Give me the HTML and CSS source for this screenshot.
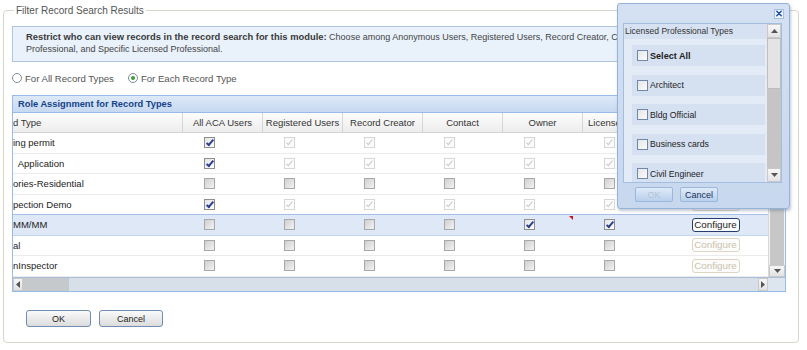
FILE: index.html
```html
<!DOCTYPE html>

<html>

<head>
  <meta charset="UTF-8" />
  <meta name="viewport" content="width=device-width, initial-scale=1.0" />
  <title>filter record search results</title>
  <link rel="stylesheet" href="styles.css">
</head>

<body>
  <fieldset class='filterBox'>
    <legend>Filter Record Search Results</legend>

    <div class='infoBox'>
      <p><b>Restrict who can view records in the record search for this module:</b> Choose among Anonymous Users, Registered Users, Record Creator, Contact, Owner, Licensed<br>Professional, and Specific Licensed Professional.</p>
    </div>

    <div class='scopeChoice'>
      <label><span class='radio'></span>For All Record Types</label>
      <label><span class='radio checked'></span>For Each Record Type</label>
    </div>

    <!-- role grid, scrolled to the right -->
    <div class='rolePanel'>
      <div class='panelTitle'>Role Assignment for Record Types</div>

      <div class='gridBody'>
        <div class='gridView'>
          <div class='gridRow gridHead'>
            <div class='nameCell'>d Type</div>
            <div>All ACA Users</div>
            <div>Registered Users</div>
            <div>Record Creator</div>
            <div>Contact</div>
            <div>Owner</div>
            <div class='clipped'>Licensed Professional</div>
            <div></div>
          </div>

          <div class='gridRow'>
            <div class='nameCell'>ing permit</div>
            <div class='cbCell'><span class='cb checked'></span></div>
            <div class='cbCell'><span class='cb locked'></span></div>
            <div class='cbCell'><span class='cb locked'></span></div>
            <div class='cbCell'><span class='cb locked'></span></div>
            <div class='cbCell'><span class='cb locked'></span></div>
            <div class='cbCell'><span class='cb locked'></span></div>
            <div class='btnCell'><button class='configBtn' disabled>Configure</button></div>
          </div>

          <div class='gridRow'>
            <div class='nameCell'>&nbsp; Application</div>
            <div class='cbCell'><span class='cb checked'></span></div>
            <div class='cbCell'><span class='cb locked'></span></div>
            <div class='cbCell'><span class='cb locked'></span></div>
            <div class='cbCell'><span class='cb locked'></span></div>
            <div class='cbCell'><span class='cb locked'></span></div>
            <div class='cbCell'><span class='cb locked'></span></div>
            <div class='btnCell'><button class='configBtn' disabled>Configure</button></div>
          </div>

          <div class='gridRow'>
            <div class='nameCell'>ories-Residential</div>
            <div class='cbCell'><span class='cb'></span></div>
            <div class='cbCell'><span class='cb'></span></div>
            <div class='cbCell'><span class='cb'></span></div>
            <div class='cbCell'><span class='cb'></span></div>
            <div class='cbCell'><span class='cb'></span></div>
            <div class='cbCell'><span class='cb'></span></div>
            <div class='btnCell'><button class='configBtn' disabled>Configure</button></div>
          </div>

          <div class='gridRow'>
            <div class='nameCell'>pection Demo</div>
            <div class='cbCell'><span class='cb checked'></span></div>
            <div class='cbCell'><span class='cb locked'></span></div>
            <div class='cbCell'><span class='cb locked'></span></div>
            <div class='cbCell'><span class='cb locked'></span></div>
            <div class='cbCell'><span class='cb locked'></span></div>
            <div class='cbCell'><span class='cb locked'></span></div>
            <div class='btnCell'><button class='configBtn' disabled>Configure</button></div>
          </div>

          <div class='gridRow selected'>
            <div class='nameCell'>MM/MM</div>
            <div class='cbCell'><span class='cb'></span></div>
            <div class='cbCell'><span class='cb'></span></div>
            <div class='cbCell'><span class='cb'></span></div>
            <div class='cbCell'><span class='cb'></span></div>
            <div class='cbCell dirty'><span class='cb checked'></span></div>
            <div class='cbCell'><span class='cb checked'></span></div>
            <div class='btnCell'><button class='configBtn'>Configure</button></div>
          </div>

          <div class='gridRow'>
            <div class='nameCell'>al</div>
            <div class='cbCell'><span class='cb'></span></div>
            <div class='cbCell'><span class='cb'></span></div>
            <div class='cbCell'><span class='cb'></span></div>
            <div class='cbCell'><span class='cb'></span></div>
            <div class='cbCell'><span class='cb'></span></div>
            <div class='cbCell'><span class='cb'></span></div>
            <div class='btnCell'><button class='configBtn' disabled>Configure</button></div>
          </div>

          <div class='gridRow'>
            <div class='nameCell'>nInspector</div>
            <div class='cbCell'><span class='cb'></span></div>
            <div class='cbCell'><span class='cb'></span></div>
            <div class='cbCell'><span class='cb'></span></div>
            <div class='cbCell'><span class='cb'></span></div>
            <div class='cbCell'><span class='cb'></span></div>
            <div class='cbCell'><span class='cb'></span></div>
            <div class='btnCell'><button class='configBtn' disabled>Configure</button></div>
          </div>
        </div>

        <div class='vScroll'>
          <div class='vThumb'></div>
          <div class='arrowBox'>
            <svg width="7" height="4" viewBox="0 0 7 4"><path d="M0 0H7L3.5 4Z" fill="#555"></path></svg>
          </div>
        </div>
      </div>

      <div class='hScrollRow'>
        <div class='hScroll'>
          <div class='arrowBox'>
            <svg width="4" height="7" viewBox="0 0 4 7"><path d="M4 0V7L0 3.5Z" fill="#555"></path></svg>
          </div>
          <div class='hThumb'></div>
          <div class='hTrack'></div>
          <div class='arrowBox'>
            <svg width="4" height="7" viewBox="0 0 4 7"><path d="M0 0V7L4 3.5Z" fill="#555"></path></svg>
          </div>
        </div>
        <div class='scrollCorner'></div>
      </div>
    </div>

    <div class='actions'>
      <button class='okBtn'>OK</button>
      <button class='cancelBtn'>Cancel</button>
    </div>
  </fieldset>

  <!-- licensed professional picker, opened over the grid -->
  <div class='lpPopup'>
    <div class='lpBar'>
      <button class='lpClose'>
        <svg width="9" height="9" viewBox="0 0 9 9">
          <path d="M2 2L7 7M7 2L2 7" stroke="#1d4e9e" stroke-width="1.6" stroke-linecap="round"></path>
        </svg>
      </button>
    </div>

    <div class='lpList'>
      <div class='lpContent'>
        <p class='lpTitle'>Licensed Professional Types</p>
        <div class='lpItems'>
          <label class='lpItem selectAll'><span class='lpCb'></span>Select All</label>
          <label class='lpItem'><span class='lpCb'></span>Architect</label>
          <label class='lpItem'><span class='lpCb'></span>Bldg Official</label>
          <label class='lpItem'><span class='lpCb'></span>Business cards</label>
          <label class='lpItem'><span class='lpCb'></span>Civil Engineer</label>
        </div>
      </div>
      <div class='lpScroll'>
        <div class='arrowBox'>
          <svg width="7" height="4" viewBox="0 0 7 4"><path d="M0 4H7L3.5 0Z" fill="#555"></path></svg>
        </div>
        <div class='lpThumb'></div>
        <div class='lpTrack'></div>
        <div class='arrowBox'>
          <svg width="7" height="4" viewBox="0 0 7 4"><path d="M0 0H7L3.5 4Z" fill="#555"></path></svg>
        </div>
      </div>
    </div>

    <div class='lpButtons'>
      <button disabled>OK</button>
      <button>Cancel</button>
    </div>
  </div>
</body>

</html>
```

FILE: styles.css
```css
body {
  margin: 0;
  font-family: "Liberation Sans", Arial, sans-serif;
  color: #333;
  background-color: #fff;
}

p {
  margin: 0;
}

button {
  font-family: "Liberation Sans", Arial, sans-serif;
  padding: 0;
}

.filterBox {
  margin: 4px 9px 0 3px;
  padding: 9px 12px 15px 8px;
  border: 1px solid #d6d6ca;
  border-radius: 4px;
}

.filterBox legend {
  margin-left: 2px;
  padding: 0 2px;
  font-size: 10px;
  line-height: 13px;
  color: #555;
}

.infoBox {
  padding: 4px 13px 6px;
  border: 1px solid #aec4df;
  background-color: #e9f1fb;
  font-size: 9px;
  line-height: 12px;
  color: #444;
}

.infoBox b {
  font-size: 9.4px;
  color: #3a3a3a;
}

.scopeChoice {
  margin-top: 8px;
  height: 16px;
  display: flex;
  align-items: center;
  gap: 14px;
  font-size: 9.6px;
  color: #555;
}

.scopeChoice label {
  display: flex;
  align-items: center;
  gap: 3px;
}

.radio {
  width: 10px;
  height: 10px;
  border: 1px solid #7d8c9c;
  border-radius: 50%;
  background-color: #fff;
  position: relative;
  box-sizing: border-box;
}

.radio.checked::after {
  content: '';
  position: absolute;
  left: 2px;
  top: 2px;
  width: 4px;
  height: 4px;
  border-radius: 50%;
  background-color: #3f9b32;
}

.rolePanel {
  margin-top: 9px;
  border: 1px solid #99bbe8;
}

.panelTitle {
  height: 16px;
  line-height: 16px;
  padding-left: 5px;
  border-bottom: 1px solid #99bbe8;
  background: linear-gradient(#dde9f7, #c6d9f1);
  color: #15428b;
  font-weight: bold;
  font-size: 9.3px;
}

.gridBody {
  display: flex;
  height: 164px;
}

.gridView {
  flex: 1;
  overflow: hidden;
}

.gridRow {
  display: grid;
  grid-template-columns: 170px repeat(6, 80px) 105px;
  height: 20.5px;
  box-sizing: border-box;
  border-bottom: 1px solid #ebebeb;
  font-size: 9.5px;
  color: #222;
}

.gridRow > div {
  display: flex;
  align-items: center;
  position: relative;
  overflow: hidden;
  white-space: nowrap;
}

.gridHead {
  height: 20px;
  border-bottom: 1px solid #d3d3d3;
  background: linear-gradient(#fdfdfd, #ececec);
  color: #333;
}

.gridHead > div {
  justify-content: center;
  border-right: 1px solid #d6d6d6;
}

.gridHead > .nameCell {
  justify-content: flex-start;
}

.gridHead > .clipped {
  justify-content: flex-start;
  padding-left: 5px;
}

.gridRow.selected {
  background-color: #dfe8f6;
  border-top: 1px solid #a9c0e6;
  border-bottom: 1px solid #c5d5ee;
  margin-top: -1px;
  height: 21.5px;
}

.cbCell {
  padding-left: 21px;
}

.btnCell {
  justify-content: center;
}

.dirty::before {
  content: '';
  position: absolute;
  left: 66px;
  top: 1px;
  border-top: 4px solid #d0101a;
  border-left: 4px solid transparent;
}

.cb {
  width: 11px;
  height: 11px;
  box-sizing: border-box;
  border: 1px solid #a8a8a8;
  background: linear-gradient(135deg, #cfcfcf, #f3f3f3);
  position: relative;
}

.cb.checked {
  border-color: #8e8e8e;
  background: linear-gradient(135deg, #e4e4e4, #fff);
}

.cb.locked {
  border-color: #d6d6d6;
  background: #fbfbfb;
}

.cb.checked::after, .cb.locked::after {
  content: '';
  position: absolute;
  left: 3px;
  top: 0;
  width: 2px;
  height: 6px;
  border: solid #2b3e95;
  border-width: 0 2px 2px 0;
  transform: rotate(40deg);
}

.cb.locked::after {
  border-color: #c8c8c8;
  border-width: 0 1px 1px 0;
}

.configBtn {
  width: 48px;
  height: 14px;
  font-size: 9.8px;
  line-height: 12px;
  color: #1d1d1d;
  background-color: #fcfcfc;
  border: 1px solid #233f72;
  border-radius: 3px;
}

.configBtn:disabled {
  color: #cbc2ab;
  border-color: #ddd5c2;
}

.vScroll {
  width: 16px;
  border-left: 1px solid #d8d8d8;
  display: flex;
  flex-direction: column;
  background-color: #f2f2f2;
}

.vThumb {
  flex: 1;
  margin: 0 1px;
  background-color: #c7c7c7;
}

.arrowBox {
  display: flex;
  justify-content: center;
  align-items: center;
  background: linear-gradient(#f7f7f7, #e2e2e2);
  border: 1px solid #c9c9c9;
  box-sizing: border-box;
}

.vScroll .arrowBox {
  height: 12px;
}

.hScrollRow {
  display: flex;
  height: 13px;
  border-top: 1px solid #a9bfd9;
}

.hScroll {
  flex: 1;
  display: flex;
  background-color: #d7e0e9;
}

.hScroll .arrowBox {
  width: 10px;
}

.hThumb {
  width: 46px;
  background-color: #c6c9cc;
}

.hTrack {
  flex: 1;
}

.scrollCorner {
  width: 17px;
  background-color: #dde5ee;
}

.actions {
  margin-top: 18px;
  padding-left: 14px;
  display: flex;
  gap: 8px;
}

.actions button {
  height: 17px;
  font-size: 9px;
  color: #222;
  border: 1px solid #6f8db5;
  border-radius: 3px;
  background: linear-gradient(#fafafa, #dcdcdc);
}

.okBtn {
  width: 65px;
}

.cancelBtn {
  width: 64px;
}

.lpPopup {
  position: absolute;
  top: 3px;
  left: 617px;
  width: 173px;
  height: 206px;
  box-sizing: border-box;
  border: 1px solid #94b2da;
  border-radius: 3px;
  background: linear-gradient(#d4e1f2, #c7d7ed);
  box-shadow: 1px 2px 3px rgba(80, 100, 130, 0.35);
  display: flex;
  flex-direction: column;
}

.lpBar {
  height: 19px;
  display: flex;
  justify-content: flex-end;
  align-items: center;
  padding-right: 5px;
}

.lpClose {
  width: 10px;
  height: 10px;
  display: flex;
  justify-content: center;
  align-items: center;
  border: 1px solid #a7bfdf;
  background-color: #eef3fa;
}

.lpList {
  margin: 0 7px 0 5px;
  height: 160px;
  box-sizing: border-box;
  border: 1px solid #a3bde0;
  background-color: #e3ebf6;
  display: flex;
}

.lpContent {
  flex: 1;
  overflow: hidden;
}

.lpTitle {
  height: 15px;
  line-height: 15px;
  padding-left: 1px;
  font-size: 8.5px;
  color: #333;
  background-color: #d6e2f2;
}

.lpItems {
  padding: 6px 2px 0 8px;
  display: flex;
  flex-direction: column;
  gap: 8.5px;
}

.lpItem {
  flex-shrink: 0;
  height: 21px;
  display: flex;
  align-items: center;
  gap: 2px;
  padding-left: 5px;
  background-color: #d5e0f1;
  font-size: 8.7px;
  color: #222;
}

.lpItem.selectAll {
  font-weight: bold;
  font-size: 9.1px;
}

.lpCb {
  width: 11px;
  height: 11px;
  box-sizing: border-box;
  border: 1px solid #6e87aa;
  background: linear-gradient(135deg, #e6e6e6, #fbfbfb);
}

.lpScroll {
  width: 14px;
  display: flex;
  flex-direction: column;
}

.lpScroll .arrowBox {
  height: 14px;
}

.lpThumb {
  height: 51px;
  box-sizing: border-box;
  border: 1px solid #bdbdbd;
  background-color: #e4e4e4;
}

.lpTrack {
  flex: 1;
  background-color: #c5c5c5;
}

.lpButtons {
  padding: 4px 0 0 17px;
  display: flex;
  gap: 7px;
}

.lpButtons button {
  width: 38px;
  height: 15px;
  font-size: 9px;
  color: #15305a;
  border: 1px solid #9bb7dc;
  border-radius: 2px;
  background: linear-gradient(#dfeaf8, #b9cfec);
}

.lpButtons button:disabled {
  color: #b2c2d8;
}
```
